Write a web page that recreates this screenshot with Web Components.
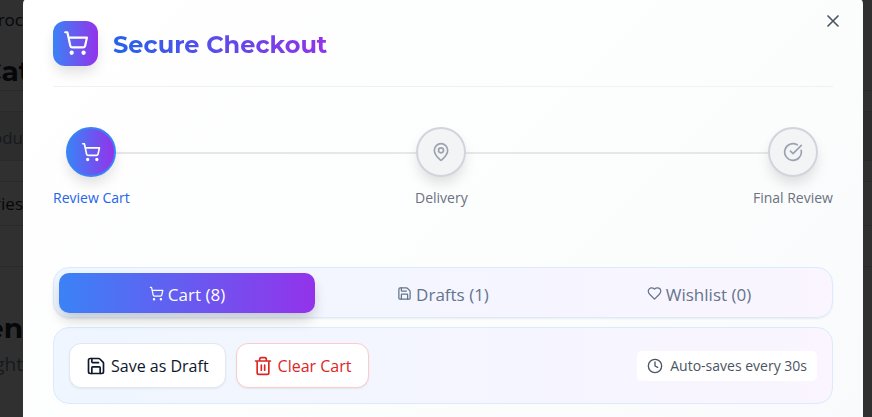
<!DOCTYPE html>
<html lang="en">
<head>
<meta charset="utf-8">
<title>Secure Checkout</title>
<style>
html, body { margin: 0; min-height: 100%; }
body { background: #303030; font-family: "Open Sans", "Noto Sans", sans-serif; color: #0f172a; }
</style>
</head>
<body>
<checkout-screen></checkout-screen>
<script>
const ICONS = {
  cart: '<path d="M2.050 2.050h2l2.660 12.420a2 2 0 0 0 2 1.580h9.780a2 2 0 0 0 1.950-1.570l1.650-7.430H5.120"/><circle cx="8" cy="21" r="1"/><circle cx="19" cy="21" r="1"/>',
  pin: '<path d="M20 10c0 5-5.500 10.200-7.400 11.800a1 1 0 0 1-1.200 0C9.500 20.200 4 15 4 10a8 8 0 0 1 16 0"/><circle cx="12" cy="10" r="3"/>',
  check: '<path d="M21.800 10A10 10 0 1 1 17 3.340"/><path d="m9 11 3 3L22 4"/>',
  save: '<path d="M15.200 3a2 2 0 0 1 1.400.600l3.800 3.800a2 2 0 0 1 .600 1.400V19a2 2 0 0 1-2 2H5a2 2 0 0 1-2-2V5a2 2 0 0 1 2-2z"/><path d="M17 21v-7a1 1 0 0 0-1-1H8a1 1 0 0 0-1 1v7M7 3v4a1 1 0 0 0 1 1h7"/>',
  heart: '<path d="M19 14c1.500-1.460 3-3.200 3-5.500A5.500 5.500 0 0 0 16.500 3c-1.760 0-3 .500-4.500 2-1.500-1.500-2.740-2-4.500-2A5.500 5.500 0 0 0 2 8.500c0 2.300 1.500 4.050 3 5.500l7 7z"/>',
  trash: '<path d="M3 6h18M19 6v14a2 2 0 0 1-2 2H7a2 2 0 0 1-2-2V6M8 6V4a2 2 0 0 1 2-2h4a2 2 0 0 1 2 2v2M10 11v6M14 11v6"/>',
  clock: '<circle cx="12" cy="12" r="10"/><path d="M12 6v6l4 2"/>',
  close: '<path d="M18 6 6 18M6 6l12 12"/>'
};

function define(name, markup, setup) {
  customElements.define(name, class extends HTMLElement {
    connectedCallback() {
      if (this.shadowRoot) return;
      const template = document.createElement('template');
      template.innerHTML = markup;
      this.attachShadow({ mode: 'open' }).append(template.content.cloneNode(true));
      if (setup) setup(this, this.shadowRoot);
    }
  });
}

define('line-icon', `
<style>
:host { display: inline-flex; flex: none; width: var(--size, 16px); height: var(--size, 16px); }
svg { width: 100%; height: 100%; fill: none; stroke: currentColor; stroke-width: 2; stroke-linecap: round; stroke-linejoin: round; }
</style><svg viewBox="0 0 24 24" aria-hidden="true"></svg>`,
(host, root) => { root.querySelector('svg').innerHTML = ICONS[host.getAttribute('name')]; });

define('page-rail', `
<style>
:host { display: block; overflow: hidden; color: #060709; }
div { display: flex; align-items: center; justify-content: flex-end; box-sizing: border-box; white-space: nowrap; border-bottom: 1px solid #292929; font-size: 17px; line-height: 24px; }
.crumb { height: 40px; border: 0; }
.title { height: 51px; margin-right: -8px; padding-top: 12px; font: 700 28px/36px Montserrat, sans-serif; }
.space { height: 21px; }
.search { height: 49px; padding-top: 4px; color: #17191c; background: #2d2d2d; }
.filter { height: 44px; }
.gap { height: 41px; }
.heading { height: 80px; padding-top: 42px; border: 0; font: 700 28px/36px Montserrat, sans-serif; }
.note { height: 34px; border: 0; color: #17191c; font-size: 19px; }
</style>
<div class="crumb"><slot name="crumb"></slot></div>
<div class="title"><slot name="title"></slot></div>
<div class="space"></div>
<div class="search"><slot name="search"></slot></div>
<div class="space"></div>
<div class="filter"><slot name="filter"></slot></div>
<div class="gap"></div>
<div class="heading"><slot name="heading"></slot></div>
<div class="note"><slot name="note"></slot></div>`);

define('checkout-header', `
<style>
:host { display: flex; align-items: center; gap: 15px; height: 87px; box-sizing: border-box; border-bottom: 1px solid #f0f1f3; position: relative; }
.badge { display: grid; place-items: center; width: 45px; height: 45px; border-radius: 12px; color: #fff; background: linear-gradient(90deg, #3b82f6, #9333ea); box-shadow: 0 8px 14px -2px #0002; --size: 26px; }
h1 { margin: 0; padding-top: 4px; font: 700 24px/34px Montserrat, Inter, sans-serif; color: transparent; background: linear-gradient(90deg, #2563eb, #9333ea); background-clip: text; -webkit-background-clip: text; }
button { position: absolute; top: 11px; right: -10px; width: 20px; height: 20px; padding: 0; border: 0; background: none; color: #4b5563; --size: 20px; }
</style>
<span class="badge"><line-icon name="cart"></line-icon></span>
<h1><slot></slot></h1>
<button type="button" aria-label="Close"><line-icon name="close"></line-icon></button>`);

define('checkout-steps', `
<style>
:host { display: flex; justify-content: space-between; margin-top: 40px; background: linear-gradient(#e5e7eb, #e5e7eb) center 25px / calc(100% - 80px) 2px no-repeat; }
</style><slot></slot>`);

define('checkout-step', `
<style>
:host { display: flex; flex-direction: column; align-items: center; gap: 10px; color: #6b7280; font-size: 14px; line-height: 22px; white-space: nowrap; }
span { display: grid; place-items: center; box-sizing: border-box; width: 50px; height: 50px; border-radius: 50%; border: 2px solid #d1d5db; background: #f3f4f6; color: #9ca3af; box-shadow: 0 8px 14px -2px #0002; --size: 20px; }
:host([current]) { color: #2563eb; }
:host([current]) span { color: #fff; border-color: #3b82f6; background: linear-gradient(90deg, #3b82f6, #9333ea); }
</style><span><slot name="icon"></slot></span><slot></slot>`);

define('checkout-tabs', `
<style>
:host { display: grid; grid-template-columns: repeat(3, 1fr); margin-top: 58px; padding: 5px 5px 4px; border: 1px solid #dbeafe; border-radius: 16px; background: linear-gradient(90deg, #eff6ff, #faf5ff); box-shadow: 0 1px 2px #0001; }
</style><slot></slot>`, host => host.setAttribute('role', 'tablist'));

define('checkout-tab', `
<style>
:host { display: block; }
button { display: flex; align-items: center; justify-content: center; gap: 4px; width: 100%; height: 40px; padding: 4px 0 0; border: 0; border-radius: 10px; background: none; color: #64748b; font: inherit; font-size: 17px; line-height: 24px; }
.icon { display: flex; padding-bottom: 4px; --size: 15px; }
:host([selected]) button { color: #fff; background: linear-gradient(90deg, #3b82f6, #9333ea); box-shadow: 0 8px 14px -2px #0003; }
</style><button type="button" role="tab"><span class="icon"><slot name="icon"></slot></span><slot></slot></button>`,
(host, root) => root.querySelector('button').setAttribute('aria-selected', host.hasAttribute('selected')));

define('cart-actions', `
<style>
:host { display: flex; align-items: center; gap: 10px; margin-top: 9px; padding: 15px; border: 1px solid #dbeafe; border-radius: 16px; background: linear-gradient(90deg, #eff6ff, #faf5ff); }
.note { display: flex; align-items: center; gap: 7px; margin-left: auto; padding: 4px 10px; border-radius: 5px; background: #fff; color: #4b5563; font-size: 14px; line-height: 22px; white-space: nowrap; }
</style><slot></slot><span class="note"><slot name="note"></slot></span>`);

define('action-button', `
<style>
button { display: flex; align-items: center; gap: 5px; height: 45px; padding: 0 16px; border: 1px solid #e2e8f0; border-radius: 12px; background: #fff; color: #0f172a; font: inherit; font-size: 16px; line-height: 24px; white-space: nowrap; box-shadow: 0 1px 2px #0001; --size: 20px; }
:host { display: block; }
:host([danger]) button { color: #dc2626; border-color: #fecaca; }
</style><button type="button"><slot></slot></button>`);

define('checkout-dialog', `
<style>
:host { display: block; padding: 0 30px 13px; border-radius: 2px 2px 0 0 / 5px 5px 0 0; background: linear-gradient(135deg, #fff, #fcfdfd 60%, #f9fafb); }
</style><slot></slot>`, host => { host.setAttribute('role', 'dialog'); host.setAttribute('aria-label', 'Secure Checkout'); });

define('checkout-screen', `
<style>
:host { display: grid; grid-template-columns: 23px minmax(0, 1fr) 9px; min-height: 100vh; overflow: hidden; }
</style>
<page-rail><span slot="crumb">roc</span><span slot="title">Cat</span><span slot="search">odu</span><span slot="filter">ries</span><span slot="heading">en</span><span slot="note">ght</span></page-rail>
<checkout-dialog>
  <checkout-header>Secure Checkout</checkout-header>
  <checkout-steps>
    <checkout-step current><line-icon slot="icon" name="cart"></line-icon>Review Cart</checkout-step>
    <checkout-step><line-icon slot="icon" name="pin"></line-icon>Delivery</checkout-step>
    <checkout-step><line-icon slot="icon" name="check"></line-icon>Final Review</checkout-step>
  </checkout-steps>
  <checkout-tabs>
    <checkout-tab selected><line-icon slot="icon" name="cart"></line-icon>Cart (8)</checkout-tab>
    <checkout-tab><line-icon slot="icon" name="save"></line-icon>Drafts (1)</checkout-tab>
    <checkout-tab><line-icon slot="icon" name="heart"></line-icon>Wishlist (0)</checkout-tab>
  </checkout-tabs>
  <cart-actions>
    <action-button><line-icon name="save"></line-icon>Save as Draft</action-button>
    <action-button danger><line-icon name="trash"></line-icon>Clear Cart</action-button>
    <line-icon slot="note" name="clock"></line-icon><span slot="note">Auto-saves every 30s</span>
  </cart-actions>
</checkout-dialog>
<page-rail></page-rail>`);
</script>
</body>
</html>
